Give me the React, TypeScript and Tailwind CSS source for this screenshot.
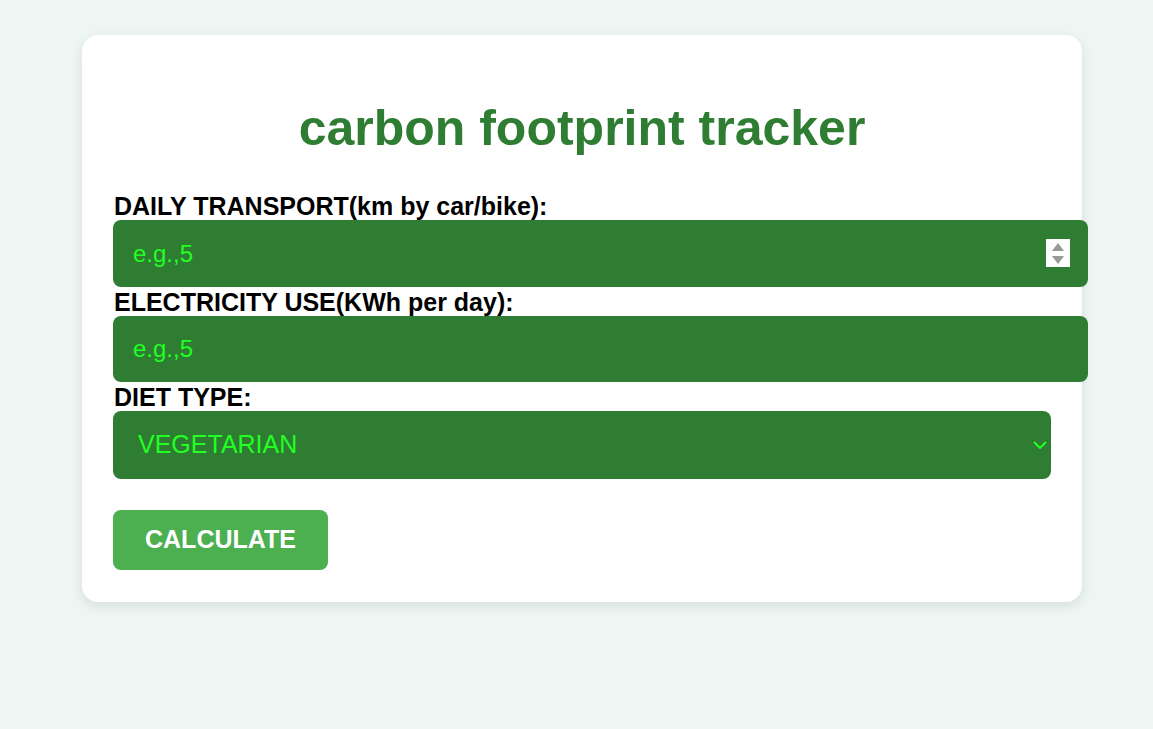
import React from "react";

export default function App() {
  return (
    <div className="min-h-[729px] w-full bg-[#eef6f3] pt-[35px] font-['Liberation_Sans',Arial,sans-serif]">
      <div className="ml-[82px] w-[1000px] rounded-[16px] bg-white px-[31px] pb-[32px] pt-[33px] shadow-[0_4px_12px_rgba(0,0,0,0.1)]">
        <h1 className="mb-[35.5px] mt-[31.5px] text-center text-[50px] font-bold leading-[57px] text-[#2e7d32]">
          carbon footprint tracker
        </h1>

        <label className="block pl-[1px] text-[25px] font-bold leading-[28px] text-black">
          DAILY TRANSPORT(km by car/bike):
        </label>
        <div className="relative w-[975px]">
          <input
            type="text"
            placeholder="e.g.,5"
            className="block h-[67px] w-[975px] rounded-[8px] bg-[#2e7d32] px-[20px] text-[24px] text-[#22ff22] outline-none placeholder:text-[#22ff22]"
          />
          <div className="pointer-events-none absolute left-[933px] top-[19px] flex h-[28px] w-[24px] flex-col items-center justify-center gap-[5px] bg-white">
            <svg width="12" height="8" viewBox="0 0 12 8">
              <polygon points="6,0 12,8 0,8" fill="#999999" />
            </svg>
            <svg width="12" height="8" viewBox="0 0 12 8">
              <polygon points="0,0 12,0 6,8" fill="#999999" />
            </svg>
          </div>
        </div>

        <label className="mt-[1px] block pl-[1px] text-[25px] font-bold leading-[28px] text-black">
          ELECTRICITY USE(KWh per day):
        </label>
        <input
          type="text"
          placeholder="e.g.,5"
          className="block h-[66px] w-[975px] rounded-[8px] bg-[#2e7d32] px-[20px] text-[24px] text-[#22ff22] outline-none placeholder:text-[#22ff22]"
        />

        <label className="mt-[1px] block pl-[1px] text-[25px] font-bold leading-[28px] text-black">
          DIET TYPE:
        </label>
        <div className="relative w-[938px]">
          <select
            defaultValue="veg"
            className="block h-[68px] w-[938px] appearance-none rounded-[8px] bg-[#2e7d32] pl-[25px] text-[25px] text-[#22ff22] outline-none"
          >
            <option value="veg">VEGETARIAN</option>
            <option value="nonveg">NON-VEGETARIAN</option>
            <option value="vegan">VEGAN</option>
          </select>
          <svg
            className="pointer-events-none absolute left-[920px] top-[30px]"
            width="14"
            height="8"
            viewBox="0 0 14 8"
          >
            <polyline points="1,1 7,7 13,1" fill="none" stroke="#22ff22" strokeWidth="2" />
          </svg>
        </div>

        <button className="mt-[31px] h-[60px] rounded-[8px] bg-[#4caf50] px-[32px] text-[25px] font-bold text-white">
          CALCULATE
        </button>
      </div>
    </div>
  );
}
